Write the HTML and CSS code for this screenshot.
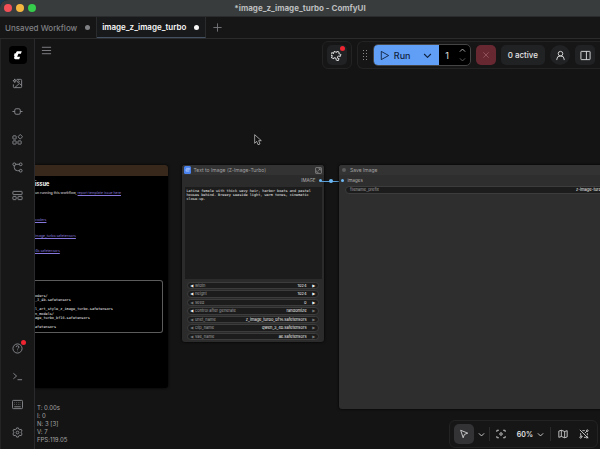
FILE: index.html
```html
<!DOCTYPE html>
<html lang="en">
<head>
<meta charset="utf-8">
<title>*image_z_image_turbo - ComfyUI</title>
<link rel="stylesheet" href="styles.css">
</head>
<body>
<div class="window">
  <header class="titlebar">
    <div class="lights"><span class="light red"></span><span class="light amber"></span><span class="light green"></span></div>
    <h1 class="window-title">*image_z_image_turbo - ComfyUI</h1>
  </header>

  <nav class="tabs">
    <button class="tab">Unsaved Workflow<span class="dot"></span></button>
    <button class="tab active">image_z_image_turbo<span class="dot"></span></button>
    <button class="tab-add" aria-label="New workflow"><svg class="icon" viewBox="0 0 24 24"><path d="M3 12h18M12 3v18"/></svg></button>
  </nav>

  <div class="workspace">
    <aside class="sidebar">
      <button class="logo" aria-label="ComfyUI"><svg viewBox="0 0 24 24"><path d="M10 3h11l-2 6h-6l-3 7h7l-2 6H6c-3 0-4-2-3-5l1-3H2l2-6h3l1-3q1-2 2-2z"/></svg></button>
      <button class="side" aria-label="Assets"><svg class="icon" viewBox="0 0 24 24"><path d="M10 3h9a2 2 0 0 1 2 2v14a2 2 0 0 1-2 2H5a2 2 0 0 1-2-2v-5M6 21l10-9 5 4M6 2l1 3 3 1-3 1-1 3-1-3-3-1 3-1z"/><circle cx="14" cy="8" r="2"/></svg></button>
      <button class="side" aria-label="Nodes"><svg class="icon" viewBox="0 0 24 24"><rect x="6" y="6" width="12" height="12" rx="3"/><path d="M1 12h5M18 12h5"/></svg></button>
      <button class="side" aria-label="Models"><svg class="icon" viewBox="0 0 24 24"><rect x="2" y="4" width="7" height="7" rx="1"/><rect x="2" y="15" width="7" height="7" rx="1"/><rect x="13" y="15" width="7" height="7" rx="1"/><path d="M18 1l5 5-5 5-5-5z"/></svg></button>
      <button class="side" aria-label="Workflows"><svg class="icon" viewBox="0 0 24 24"><circle cx="5" cy="5" r="3"/><circle cx="19" cy="5" r="3"/><circle cx="19" cy="19" r="3"/><path d="M8 5h8M5 8v4q0 7 7 7h4"/></svg></button>
      <button class="side" aria-label="Templates"><svg class="icon" viewBox="0 0 24 24"><rect x="2" y="3" width="20" height="7" rx="1"/><rect x="2" y="14" width="7" height="7" rx="1"/><rect x="13" y="14" width="9" height="7" rx="1"/></svg></button>
      <span class="spacer"></span>
      <button class="side" aria-label="Help"><svg class="icon" viewBox="0 0 24 24"><circle cx="12" cy="12" r="10"/><path d="M9 9q0-3 3-3t3 3q0 2-3 4v1M12 17v1"/></svg><span class="badge"></span></button>
      <button class="side" aria-label="Console"><svg class="icon" viewBox="0 0 24 24"><path d="M3 5l7 6-7 6M12 19h10"/></svg></button>
      <button class="side" aria-label="Keyboard shortcuts"><svg class="icon" viewBox="0 0 24 24"><rect x="1" y="3" width="22" height="18" rx="2"/><path d="M5 8h1M9 8h1M13 8h1M17 8h1M5 12h1M9 12h1M13 12h1M17 12h1M5 17h14"/></svg></button>
      <button class="side" aria-label="Settings"><svg class="icon" viewBox="0 0 24 24"><path d="M10 2h4l1 3 2 1 3-1 2 4-2 2v2l2 2-2 4-3-1-2 1-1 3h-4l-1-3-2-1-3 1-2-4 2-2v-2L2 9l2-4 3 1 2-1z"/><circle cx="12" cy="12" r="3"/></svg></button>
    </aside>

    <main class="canvas">
      <div class="graph">
        <article class="node note">
          <div class="note-head"></div>
          <div class="note-body">
            <h2>issue</h2>
            <p>un running this workflow, <a href="#">report template issue here</a></p>
            <ul>
              <li><a href="#">coders</a></li>
              <li><a href="#">image_turbo.safetensors</a></li>
              <li><a href="#">4b.safetensors</a></li>
            </ul>
            <pre>

oders/
_3_4b.safetensors

l_art_style_z_image_turbo.safetensors
n_models/
age_turbo_bf16.safetensors

afetensors</pre>
          </div>
        </article>

        <article class="node prompt">
          <div class="node-head"><span class="subgraph"><svg class="icon" viewBox="0 0 24 24"><path d="M5 6h14v4M19 18H5v-4M2 12h18"/></svg></span><span class="name">Text to Image (Z-Image-Turbo)</span><button class="expand" aria-label="Open subgraph"><svg class="icon" viewBox="0 0 24 24"><rect x="2" y="2" width="20" height="20" rx="2"/><path d="M12 6h6v6M18 6l-7 7M6 12v6h6"/></svg></button></div>
          <div class="slot out">IMAGE<span class="port"></span></div>
          <textarea aria-label="Prompt" spellcheck="false">Latina female with thick wavy hair, harbor boats and pastel houses behind. Breezy seaside light, warm tones, cinematic close-up.</textarea>
          <div class="widgets">
            <div class="widget"><button aria-label="Decrease width">◀</button><label for="w">width</label><input id="w" value="1024"><button aria-label="Increase width">▶</button></div>
            <div class="widget"><button aria-label="Decrease height">◀</button><label for="h">height</label><input id="h" value="1024"><button aria-label="Increase height">▶</button></div>
            <div class="widget"><button class="off" aria-label="Decrease seed">◀</button><label for="s">seed</label><input id="s" value="0"><button aria-label="Increase seed">▶</button></div>
            <div class="widget"><button aria-label="Previous mode">◀</button><label for="c">control after generate</label><select id="c"><option>randomize</option></select><button aria-label="Next mode" class="off">▶</button></div>
            <div class="widget"><button class="off" aria-label="Previous unet">◀</button><label for="u">unet_name</label><select id="u"><option>z_image_turbo_bf16.safetensors</option></select><button class="off" aria-label="Next unet">▶</button></div>
            <div class="widget"><button class="off" aria-label="Previous clip">◀</button><label for="l">clip_name</label><select id="l"><option>qwen_3_4b.safetensors</option></select><button class="off" aria-label="Next clip">▶</button></div>
            <div class="widget"><button class="off" aria-label="Previous vae">◀</button><label for="v">vae_name</label><select id="v"><option>ae.safetensors</option></select><button class="off" aria-label="Next vae">▶</button></div>
          </div>
        </article>

        <span class="wire"></span>

        <article class="node save">
          <div class="node-head"><span class="collapse"></span><span class="name">Save Image</span></div>
          <div class="slot"><span class="port"></span>images</div>
          <div class="widget wide"><label for="p">filename_prefix</label><input id="p" value="z-image-turbo"></div>
        </article>
      </div>

      <button class="menu" aria-label="Menu"><svg class="icon" viewBox="0 0 24 24"><path d="M2 5h20M2 12h20M2 19h20"/></svg></button>

      <div class="topbar">
        <div class="panel extension">
          <button class="square" aria-label="Extensions"><svg class="icon bright" viewBox="0 0 24 24"><path d="M9 6a3 3 0 1 1 6 0h5v5a3 3 0 1 0 0 5v5h-5a3 3 0 1 0-6 0H4v-5a3 3 0 1 1 0-5V6z" transform="rotate(25 12 12)"/></svg><span class="badge"></span></button>
        </div>
        <div class="panel actions">
          <span class="grip"><i></i><i></i><i></i><i></i><i></i><i></i><i></i><i></i></span>
          <div class="run-group">
            <button class="run"><svg class="icon" viewBox="0 0 24 24"><path d="M5 3l16 9-16 9z"/></svg>Run</button>
            <button class="run-more" aria-label="Run options"><svg class="icon" viewBox="0 0 24 24"><path d="M3 8l9 9 9-9"/></svg></button>
            <input class="count" aria-label="Batch count" value="1">
            <div class="stepper"><button aria-label="More"><svg class="icon" viewBox="0 0 24 24"><path d="M3 16l9-9 9 9"/></svg></button><button class="less" aria-label="Fewer"><svg class="icon" viewBox="0 0 24 24"><path d="M3 8l9 9 9-9"/></svg></button></div>
          </div>
          <button class="square cancel" aria-label="Cancel"><svg class="icon" viewBox="0 0 24 24"><path d="M4 4l16 16M20 4L4 20"/></svg></button>
          <button class="active-jobs">0 active</button>
          <button class="square round" aria-label="Account"><svg class="icon bright" viewBox="0 0 24 24"><circle cx="12" cy="8" r="5"/><path d="M4 22v-2q0-7 8-7t8 7v2"/></svg></button>
          <button class="square" aria-label="Toggle panel"><svg class="icon bright" viewBox="0 0 24 24"><rect x="2" y="3" width="20" height="18" rx="1"/><path d="M14 3v18"/></svg></button>
        </div>
      </div>

      <svg class="pointer" viewBox="0 0 12 18"><path d="M1 1v13l3-3 2 5 3-1-2-5h4z"/></svg>

      <div class="stats">T: 0.00s<br>I: 0<br>N: 3 [3]<br>V: 7<br>FPS:119.05</div>

      <div class="panel view-tools">
        <button class="square" aria-label="Select"><svg class="icon bright" viewBox="0 0 24 24"><path d="M4 3l17 7-8 3-3 8z"/></svg></button>
        <button class="chev" aria-label="Pointer mode"><svg class="icon bright" viewBox="0 0 24 24"><path d="M3 8l9 9 9-9"/></svg></button>
        <span class="rule"></span>
        <button class="tool" aria-label="Fit view"><svg class="icon bright" viewBox="0 0 24 24"><path d="M2 7V3h5M17 3h5v4M22 17v4h-5M7 21H2v-4"/><circle cx="12" cy="12" r="3"/></svg></button>
        <button class="zoom">60%<svg class="icon bright" viewBox="0 0 24 24"><path d="M3 8l9 9 9-9"/></svg></button>
        <span class="rule"></span>
        <button class="tool" aria-label="Minimap"><svg class="icon bright" viewBox="0 0 24 24"><path d="M2 5l6-2 8 3 6-2v15l-6 2-8-3-6 2zM8 3v15M16 6v15"/></svg></button>
        <button class="tool" aria-label="Hide links"><svg class="icon bright" viewBox="0 0 24 24"><path d="M2 2l20 20M8 4h6M9 18h-1q-4 0-4-4v-4M14 10l5-5M12 20h4M20 10v5"/><circle cx="20" cy="4" r="2"/><circle cx="4" cy="20" r="2"/><circle cx="19" cy="20" r="2"/></svg></button>
      </div>
    </main>
  </div>
</div>
</body>
</html>
```

FILE: styles.css
```css
* { box-sizing: border-box; }

html { background: #173a52; }

body {
  margin: 0;
  font-family: Inter, "Liberation Sans", sans-serif;
  font-size: 8px;
  color: #e4e4e4;
}

button, input, select, textarea {
  margin: 0;
  padding: 0;
  border: 0;
  background: none;
  color: inherit;
  font: inherit;
  appearance: none;
}

button { display: flex; align-items: center; justify-content: center; position: relative; flex: none; }

.icon { width: 11px; height: 11px; fill: none; stroke: currentColor; stroke-width: 2; stroke-linejoin: round; flex: none; }
.bright { color: #dedede; }

.window {
  height: 100vh;
  display: flex;
  flex-direction: column;
  overflow: hidden;
  border-radius: 8px 0 0 0;
  background: #171718;
}

/* Title bar */
.titlebar { height: 17px; flex: none; display: grid; grid-template-columns: 1fr auto 1fr; align-items: center; padding: 0 4px; background: #383c3d; border-bottom: 1px solid #292b2c; }
.lights { display: flex; gap: 4px; }
.light { width: 8px; height: 8px; border-radius: 50%; }
.red { background: #f25056; }
.amber { background: #f5b63f; }
.green { background: #35cd4b; }
.window-title { margin: 0; font-size: 8px; font-weight: 700; color: #bcbebf; }

/* Workflow tabs */
.tabs { height: 22px; flex: none; display: flex; border-bottom: 1px solid #2a2b2d; background: #161617; }
.tab { gap: 8px; padding: 0 6px 0 5px; font-weight: 500; color: #808184; border-right: 1px solid #2a2b2d; }
.tab.active { color: #f8f8f8; font-weight: 600; background: #18191b; border-bottom: 1px solid #435163; }
.dot { width: 5px; height: 5px; border-radius: 50%; background: currentColor; }
.tab-add { width: 22px; color: #77787b; }

.workspace { flex: 1; min-height: 0; display: flex; }

/* Sidebar */
.sidebar { width: 35px; flex: none; display: flex; flex-direction: column; align-items: center; padding: 7px 0 3px; border-right: 1px solid #2a2a2c; border-left: 1px solid #242425; }
.logo { width: 18px; height: 18px; margin-bottom: 5px; border-radius: 4px; background: #000; }
.logo svg { width: 10px; height: 10px; fill: #fff; }
.side { width: 28px; height: 28px; color: #8b8c90; }
.spacer { flex: 1; }
.badge { position: absolute; width: 5px; height: 5px; border-radius: 50%; background: #ee2531; top: 6px; right: 6px; }

/* Graph canvas */
.canvas { flex: 1; min-width: 0; position: relative; overflow: hidden; background: #141415; }
.graph { position: absolute; inset: 0; zoom: 0.5; }
.node { position: absolute; top: 252px; border-radius: 6px; box-shadow: 0 0 6px #000; font-size: 8px; }

.note { left: 0; width: 266px; height: 446px; display: flex; flex-direction: column; background: #000; border-radius: 0 6px 6px 0; overflow: hidden; }
.note-head { height: 22px; background: #38281b; }
.note-body { padding: 8px 10px 0 0; }
.note h2 { margin: 0; font-size: 11px; line-height: 16px; color: #fff; }
.note p { margin: 4px 0 0; line-height: 12px; font-size: 7px; white-space: nowrap; }
.note a { color: #8577dc; }
.note ul { margin: 42px 0 0; padding: 0; list-style: none; display: grid; gap: 19px; font-size: 7px; }
.note li { line-height: 12px; white-space: nowrap; }
.note pre { margin: 52px 0 0; padding: 16px 0 5px; border: 1px solid #5c5c5c; border-left: 0; border-radius: 0 6px 6px 0; font: 7px/9px "DejaVu Sans Mono", monospace; color: #f0f0f0; }

.prompt { left: 293px; width: 285px; height: 354px; padding-bottom: 4px; display: flex; flex-direction: column; background: #2b2b2b; }
.save { left: 608px; width: 560px; height: 488px; background: #2e2e2e; }
.node-head { height: 20px; flex: none; display: flex; align-items: center; gap: 5px; padding: 0 5px; border-radius: 6px 6px 0 0; background: #333; color: #a2a2a2; font-size: 10px; }
.prompt .node-head { padding-left: 4px; }
.name { flex: 1; white-space: nowrap; }
.subgraph { width: 15px; height: 15px; display: grid; place-items: center; border-radius: 3px; background: #4b83ee; color: #fff; }
.expand { width: 14px; height: 14px; color: #aaa; }
.expand .icon { width: 14px; height: 14px; }
.collapse { width: 8px; height: 8px; margin: 0 3px 0 1px; border-radius: 50%; background: #5c5c5c; }
.slot { height: 22px; flex: none; display: flex; align-items: center; gap: 7px; padding: 0 4px; color: #b4b4b4; font-size: 9px; }
.port { width: 6px; height: 6px; border-radius: 50%; background: #6cb8f4; }
.out { justify-content: flex-end; }
.wire { position: absolute; left: 572px; top: 283px; width: 40px; height: 2px; background: #5c9fd6; }
.wire::after { content: ""; position: absolute; left: 16px; top: -3px; width: 8px; height: 8px; border-radius: 50%; background: #6cb8f4; }

.prompt textarea { flex: 1; margin: 2px 5px 6px 6px; padding: 3px 4px; background: #1c1c1c; color: #ececec; resize: none; overflow: hidden; font: 7px/8px "DejaVu Sans Mono", monospace; }
.widgets { display: grid; gap: 2px; padding: 0 10px 0 11px; flex: none; }
.widget { height: 15px; display: flex; align-items: center; gap: 3px; padding: 0 5px 0 4px; border-radius: 8px; background: #1c1c1c; border: 1px solid #3c3c3c; color: #a0a0a0; }
.widget label { white-space: nowrap; }
.widget input, .widget select { flex: 1; min-width: 0; width: 0; height: 13px; color: #f2f2f2; text-align: right; text-align-last: right; padding-right: 8px; }
.widget button { width: 7px; font: 8px "DejaVu Sans", sans-serif; color: #f2f2f2; }
.widget .off { color: #777; }
.wide { margin: 0 12px; padding-left: 8px; }
.save .wide input { padding-right: 12px; }

/* Overlays */
.menu { position: absolute; left: 5px; top: 5px; width: 13px; height: 13px; color: #85868a; }
.topbar { position: absolute; top: 2px; right: 0; display: flex; gap: 5px; }
.panel { display: flex; align-items: center; border: 1px solid #232324; border-radius: 6px; background: #161617; height: 28px; }
.extension { padding: 0 4px; }
.extension .badge { top: 1px; right: 2px; }
.actions { padding: 0 5px 0 4px; gap: 5px; border-right: 0; border-radius: 6px 0 0 6px; }
.square { width: 20px; height: 20px; border-radius: 5px; background: #212224; }
.round { border-radius: 50%; }
.grip { display: grid; grid-template-columns: 1px 1px; gap: 2px; padding: 0 1px; }
.grip i { width: 1px; height: 1px; background: #8b8b8b; }
.run-group { display: flex; height: 22px; width: 98px; border-radius: 5px; overflow: hidden; border: 1px solid #444; background: #000; }
.run, .run-more { background: #619ff7; color: #10233f; }
.run { width: 42px; gap: 4px; font-size: 9px; font-weight: 500; }
.run-more { width: 23px; }
.run-more .icon { width: 9px; height: 9px; }
.run-more .icon, .stepper .icon { stroke-width: 3; }
.count { flex: 1; width: 0; text-align: center; font-size: 9px; }
.stepper { width: 14px; display: flex; flex-direction: column; justify-content: space-evenly; align-items: center; color: #bbb; }
.stepper .icon { width: 7px; height: 7px; display: block; }
.stepper .less { color: #666; }
.cancel { background: #672831; color: #a5666e; }
.cancel .icon { width: 8px; height: 8px; }
.active-jobs { height: 20px; padding: 0 7px; border-radius: 5px; background: #212224; font-weight: 500; }

.pointer { position: absolute; left: 219px; top: 95px; width: 8px; height: 12px; fill: #111; stroke: #ddd; stroke-width: 1; }

.stats { position: absolute; left: 2px; bottom: 5px; font-size: 6px; line-height: 8px; color: #a4a4a4; }

.view-tools { position: absolute; right: 2px; bottom: 1px; padding: 0 4px; gap: 2px; }
.view-tools .square { background: #333336; }
.view-tools .icon { width: 10px; height: 10px; }
.view-tools .chev { width: 11px; height: 20px; }
.view-tools .chev .icon, .view-tools .zoom .icon { width: 7px; height: 7px; stroke-width: 3; }
.rule { width: 1px; height: 14px; background: #2b2b2d; }
.tool { width: 19px; height: 20px; }
.zoom { gap: 4px; padding: 0 4px; height: 20px; font-size: 7px; font-weight: 600; }
```
